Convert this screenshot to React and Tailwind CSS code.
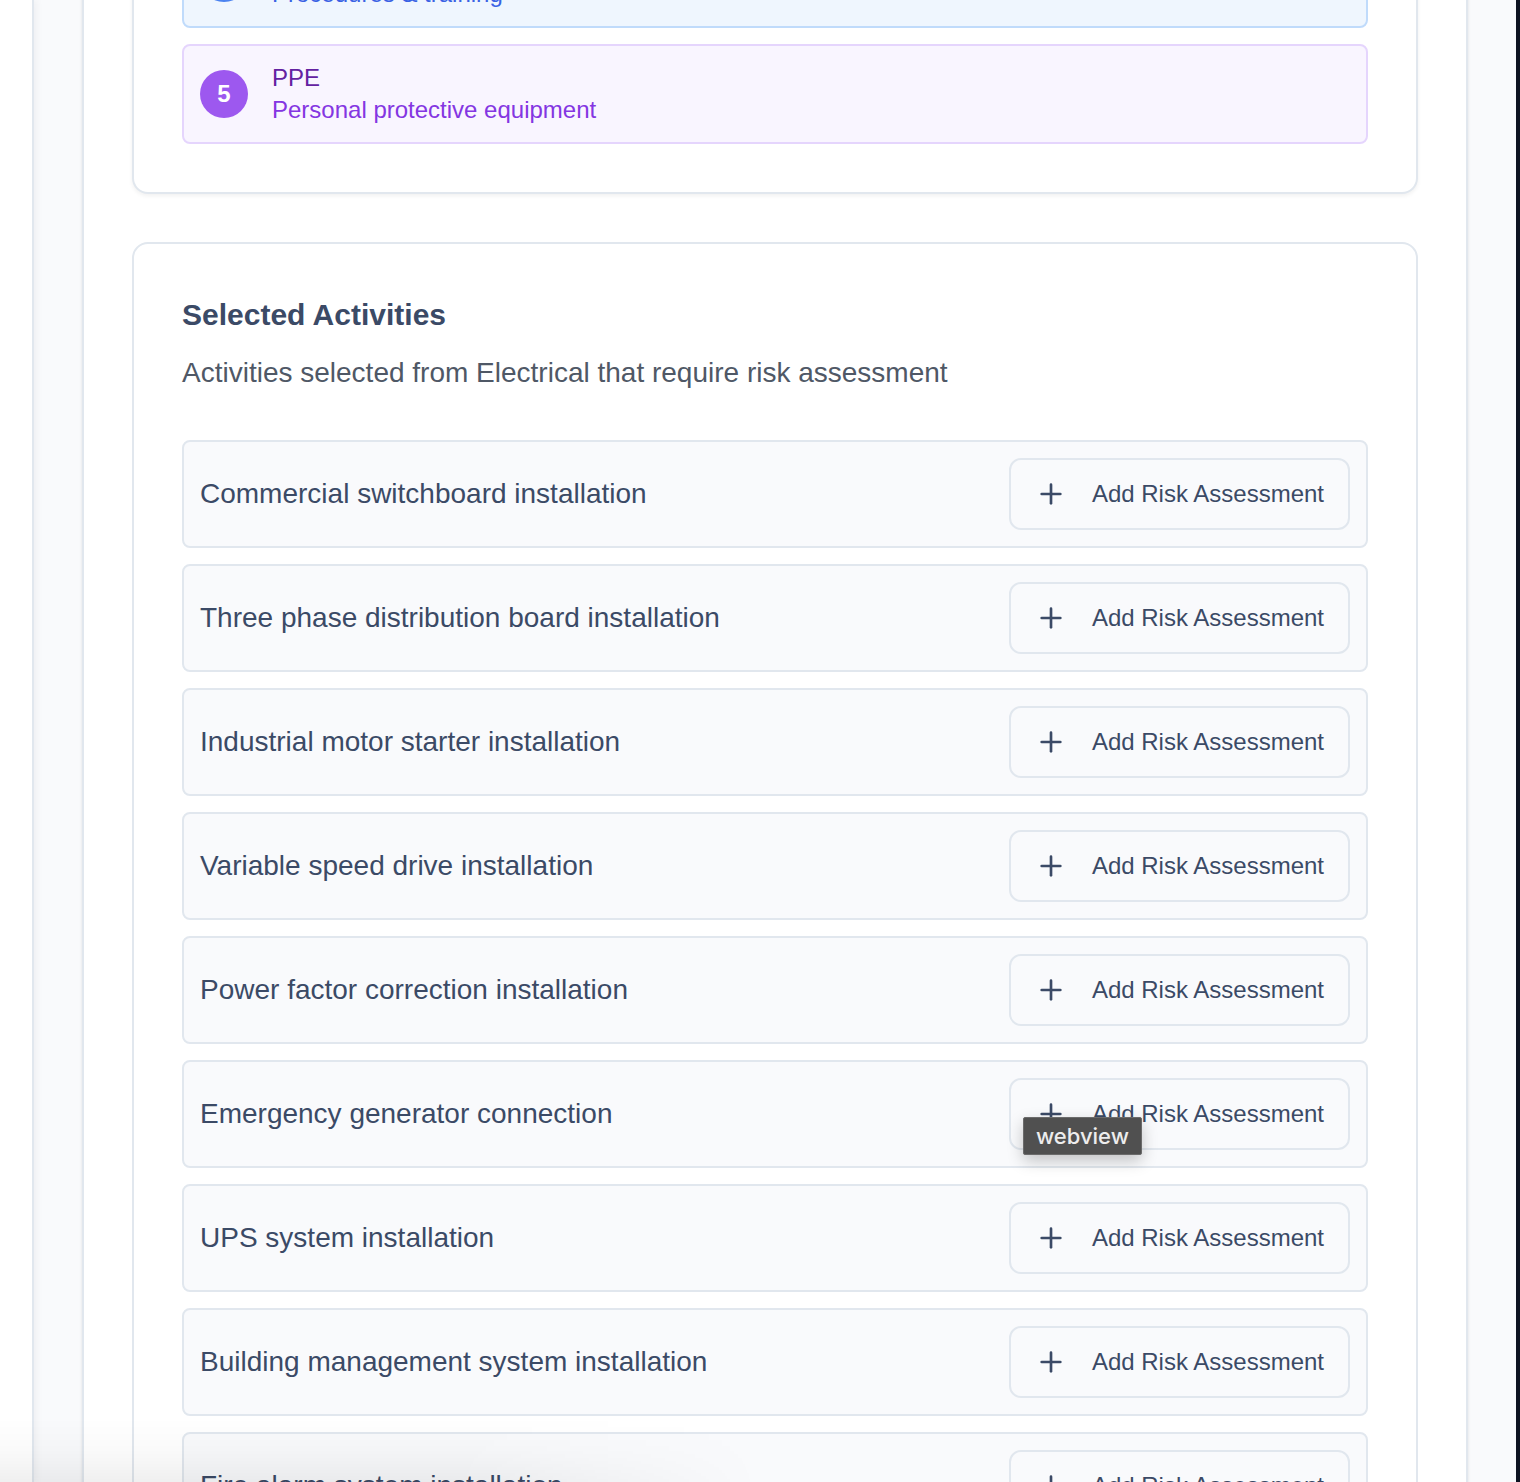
import { Plus } from "lucide-react";

const activities = [
  "Commercial switchboard installation",
  "Three phase distribution board installation",
  "Industrial motor starter installation",
  "Variable speed drive installation",
  "Power factor correction installation",
  "Emergency generator connection",
  "UPS system installation",
  "Building management system installation",
  "Fire alarm system installation",
];

function ActivityRow({ name, tooltip }) {
  return (
    <li className="flex items-center justify-between rounded-lg border-2 border-[#e1e7ee] bg-[#f9fafc] p-4">
      <span className="text-[28px] leading-10 text-[#3b4a66]">{name}</span>
      <div className="relative">
        <button
          type="button"
          aria-label={`Add Risk Assessment: ${name}`}
          className="flex h-18 items-center gap-[25px] rounded-xl border-2 border-[#e1e7ee] bg-[#f9fafc] px-6 text-2xl text-[#3b4a66]"
        >
          <Plus className="size-8" aria-hidden="true" />
          Add Risk Assessment
        </button>
        {tooltip && (
          <span
            role="tooltip"
            className="absolute top-[39px] left-[14px] flex h-[38px] items-center rounded-xs border border-[#6b6b6b] bg-[#505050] px-3 font-[family-name:Inter,sans-serif] text-[22px] font-medium text-[#ededed] shadow-[0_6px_16px_rgba(0,0,0,0.22)]"
          >
            {tooltip}
          </span>
        )}
      </div>
    </li>
  );
}

export default function App() {
  return (
    <div className="relative flex h-screen overflow-hidden bg-[#f9fafc] font-['Liberation_Sans',Arial,sans-serif]">
      <aside className="w-[34px] shrink-0 border-r-2 border-[#e1e7ee] bg-white shadow-[2px_0_8px_rgba(15,23,42,0.05)]" />

      <main className="min-w-0 grow px-12">
        <div className="border-x-2 border-[#e1e7ee] bg-white px-12 shadow-sm">
          <section className="rounded-b-2xl border-x-2 border-b-2 border-[#e1e7ee] bg-white px-12 pb-12 shadow-[0_2px_4px_rgba(0,0,0,0.06)]">
            <ul className="-mt-18 flex flex-col gap-4">
              <li className="flex h-[100px] items-center gap-6 rounded-lg border-2 border-[#c0dbfb] bg-[#eff6fe] px-4">
                <span className="size-12 shrink-0 rounded-full bg-[#4b83f0]" />
                <span className="flex h-16 items-end text-2xl text-[#3a62e4]">Procedures &amp; training</span>
              </li>
              <li className="flex items-center gap-6 rounded-lg border-2 border-[#e5d5fd] bg-[#f9f5ff] p-4">
                <span className="flex size-12 shrink-0 items-center justify-center rounded-full bg-[#9d58ef] text-2xl font-bold text-white">
                  5
                </span>
                <div className="text-2xl text-[#8436e2]">
                  <p className="text-[#6322a1]">PPE</p>
                  <p>Personal protective equipment</p>
                </div>
              </li>
            </ul>
          </section>

          <section className="mt-12 rounded-2xl border-2 border-[#e1e7ee] bg-white p-12">
            <h2 className="text-3xl leading-[46px] font-bold text-[#3b4a66]">Selected Activities</h2>
            <p className="mt-4 text-[28px] leading-[38px] text-[#4f5866]">
              Activities selected from Electrical that require risk assessment
            </p>
            <ul className="mt-12 flex flex-col gap-4">
              {activities.map((name) => (
                <ActivityRow
                  key={name}
                  name={name}
                  tooltip={name === "Emergency generator connection" ? "webview" : null}
                />
              ))}
            </ul>
          </section>
        </div>
      </main>

      <div className="w-1 shrink-0 bg-[#0d1321]" />
      <div className="pointer-events-none absolute bottom-0 left-0 h-16 w-1/2 bg-linear-to-t from-black/6 via-black/2 to-transparent mask-r-from-60%" />
    </div>
  );
}
